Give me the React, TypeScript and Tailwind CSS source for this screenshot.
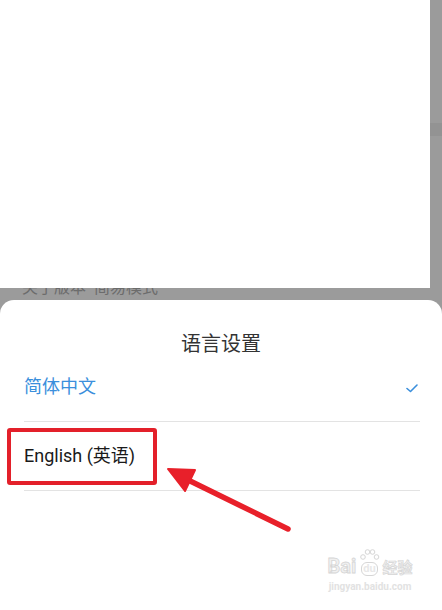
import React from "react";

const font = { fontFamily: 'Roboto, "Noto Sans CJK SC", sans-serif' };

const CheckMark = () => (
  <svg width="12" height="9" viewBox="0 0 12 9" fill="none">
    <polyline points="1,4.5 4.5,7.5 11,1" stroke="#3b8fdc" strokeWidth="1.6" strokeLinecap="round" strokeLinejoin="round" />
  </svg>
);

const Arrow = () => (
  <svg width="140" height="80" viewBox="0 0 140 80" className="absolute left-[160px] top-[460px]">
    <line x1="128" y1="69" x2="22" y2="17" stroke="#e8202a" strokeWidth="5.5" strokeLinecap="round" />
    <polygon points="8,9 35,10 25,31" fill="#e8202a" stroke="#e8202a" strokeWidth="2" strokeLinejoin="round" />
  </svg>
);

const Watermark = () => (
  <div className="absolute left-[324px] top-[556px] flex w-[92px] flex-col items-center" style={font}>
    <div className="flex items-end">
      <span className="text-[20px] font-bold leading-none text-[#f0f0f0]" style={{ WebkitTextStroke: "0.8px #d6d6d6" }}>Bai</span>
      <div className="relative mx-[1px] flex h-[20px] w-[24px] items-end justify-center">
        <svg width="24" height="14" viewBox="0 0 24 14" className="absolute left-0 top-[-8px]">
          <circle cx="6" cy="9" r="2.3" fill="none" stroke="#d6d6d6" />
          <circle cx="10.5" cy="4" r="2.3" fill="none" stroke="#d6d6d6" />
          <circle cx="15.5" cy="4" r="2.3" fill="none" stroke="#d6d6d6" />
          <circle cx="19.5" cy="9" r="2.3" fill="none" stroke="#d6d6d6" />
        </svg>
        <span className="rounded-[6px] border border-[#d6d6d6] px-[1px] text-[11px] font-bold leading-[12px] text-[#e8e8e8]">du</span>
      </div>
      <span className="text-[15px] font-bold leading-none text-[#f0f0f0]" style={{ WebkitTextStroke: "0.7px #d6d6d6" }}>经验</span>
    </div>
    <span className="mt-[6px] text-[10px] font-bold leading-none text-[#e2e2e2]">jingyan.baidu.com</span>
  </div>
);

export default function App() {
  return (
    <div className="relative h-[610px] w-[442px] overflow-hidden bg-[#9b9b9b]" style={font}>
      <div className="flex h-[288px]">
        <div className="h-full w-[430px] bg-white" />
        <div className="flex flex-1 flex-col pt-[123px]">
          <div className="h-[13px] bg-[#939393]" />
        </div>
      </div>

      <div className="h-[12px] overflow-hidden pl-[22px]">
        <div className="-mt-[10px] text-[16px] leading-[20px] text-[#6c6c6c]">关于版本&nbsp;&nbsp;简易模式</div>
      </div>

      <div className="h-[310px] rounded-t-[14px] bg-white">
        <div className="h-[58px] pt-[30px] text-center text-[20px] leading-[28px] text-[#333333]">语言设置</div>

        <div className="mx-[24px] mr-[22px] flex h-[64px] items-center justify-between border-b border-[#e3e3e3] pb-[6px]">
          <span className="text-[18px] leading-[24px] text-[#3b8fdc]">简体中文</span>
          <span className="mr-[2px] mt-[3px]">
            <CheckMark />
          </span>
        </div>

        <div className="mx-[24px] mr-[22px] flex h-[69px] items-center border-b border-[#e3e3e3]">
          <span className="text-[18px] leading-[24px] text-[#1a1a1a]">English (英语)</span>
        </div>
      </div>

      <div className="absolute left-[7px] top-[428px] h-[57px] w-[150px] rounded-[3px] border-[4px] border-[#e3202a]" />
      <Arrow />
      <Watermark />
    </div>
  );
}
